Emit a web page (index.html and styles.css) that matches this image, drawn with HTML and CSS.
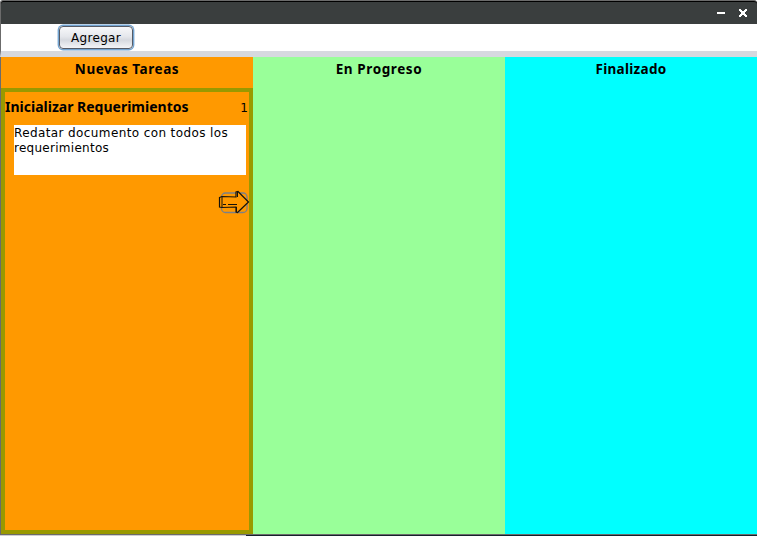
FILE: index.html
```html
<!DOCTYPE html>
<html lang="es">
<head>
<meta charset="utf-8">
<title>Tareas</title>
<link rel="stylesheet" href="styles.css">
</head>
<body>
<div class="window">
  <header class="titlebar">
    <svg class="controls" width="32" height="12" viewBox="0 0 32 12" shape-rendering="crispEdges">
      <path d="M0 5h8v2H0z" fill="#fff"/>
      <path d="M22 2h2v1h1v1h2V3h1V2h2v2h-1v1h-1v2h1v1h1v2h-2V9h-1V8h-2v1h-1v1h-2V8h1V7h1V5h-1V4h-1z" fill="#fff"/>
    </svg>
  </header>
  <div class="toolbar"><button class="add">Agregar</button></div>
  <main class="board">
    <section class="column new">
      <h2>Nuevas Tareas</h2>
      <article class="card">
        <div class="card-head"><h3>Inicializar Requerimientos</h3><span class="count">1</span></div>
        <p class="description"><span class="line-one">Redatar documento con todos los</span><br><span class="line-two">requerimientos</span></p>
        <button class="next" aria-label="Avanzar">
          <svg width="32" height="24" viewBox="0 0 32 24" fill="none">
            <rect x="3.500" y="3" width="25.500" height="19.500" rx="4" stroke="#7b8088" stroke-width="1.300"/>
            <path d="M1.500 7.500 4 6.500l14 .5V2l2-.5L30.500 12 19.500 22.500 18 22v-5L4 17.500 1.500 17z" fill="#ff9900" stroke="#15120b" stroke-width="1.200"/>
            <path d="M4 6.500v10.500M19.500 2v5M18.500 22v-5M5 14.500h3m2 0h9" stroke="#15120b"/>
          </svg>
        </button>
      </article>
    </section>
    <section class="column progress"><h2>En Progreso</h2></section>
    <section class="column done"><h2>Finalizado</h2></section>
  </main>
  <footer class="edge"><span class="edge-light"></span><span class="edge-dark"></span></footer>
</div>
</body>
</html>
```
FILE: styles.css
```css
* { box-sizing: border-box; }
body { margin: 0; overflow: hidden; font-family: "DejaVu Sans", sans-serif; font-size: 12px; color: #000; }
h2, h3, p { margin: 0; }
button { font: inherit; color: inherit; padding: 0; }
.window { display: flex; flex-direction: column; width: 757px; height: 536px; }
.titlebar { height: 24px; flex: none; background: #3a3e3e; border-top: 1px solid #6b6b6b; border-left: 1px solid #6b6b6b; border-radius: 3px 3px 0 0; box-shadow: inset 0 1px #000; display: flex; justify-content: flex-end; padding: 6px 8px 0 0; }
.toolbar { height: 33px; flex: none; background: #fff; border-bottom: 6px solid #d6d9df; border-left: 1px solid #6b6b6b; padding: 2px 0 0 58px; }
.add { display: block; width: 74px; height: 23px; border: 1px solid #565b66; border-radius: 4px; background: linear-gradient(#f7f8fa 0%, #e5e7ec 45%, #d6d9df 62%, #f3f4f7 100%); letter-spacing: .35px; box-shadow: 0 0 0 1.4px #73a4d1; padding-top: 1px; line-height: 20px; }
.board { display: grid; grid-template-columns: repeat(3, 252px); height: 477px; flex: none; border-left: 1px solid #6b6b6b; }
.column { display: flex; flex-direction: column; }
.column h2 { height: 31px; padding-top: 4px; font-size: 13.5px; line-height: 16px; text-align: center; font-family: "Noto Sans", sans-serif; }
.new { background: #ff9900; }
.progress { background: #99ff99; }
.done { background: #00ffff; }
.new h2 { letter-spacing: .55px; }
.progress h2 { letter-spacing: .6px; }
.done h2 { letter-spacing: .3px; }
.card { flex: 1; border: 4px solid #999900; padding: 6px 0 0; }
.card-head { display: flex; justify-content: space-between; align-items: baseline; height: 27px; padding-right: 1px; line-height: 17px; }
.card h3 { font-size: 14px; line-height: 17px; white-space: nowrap; font-family: "Noto Sans", sans-serif; }
.description { width: 232px; height: 50px; margin-left: 9px; padding-top: 1px; background: #fff; line-height: 15px; white-space: nowrap; }
.line-one { letter-spacing: .39px; }
.line-two { letter-spacing: .27px; }
.next { display: block; width: 32px; height: 24px; border: 0; background: none; margin: 15px 0 0 213px; }
.next svg { display: block; }
.edge { height: 2px; flex: none; border-top: 1px solid #6b6b6b; display: flex; }
.edge-light { width: 246px; background: #cfcfcf; }
.edge-dark { flex: 1; background: #16212b; }
```
